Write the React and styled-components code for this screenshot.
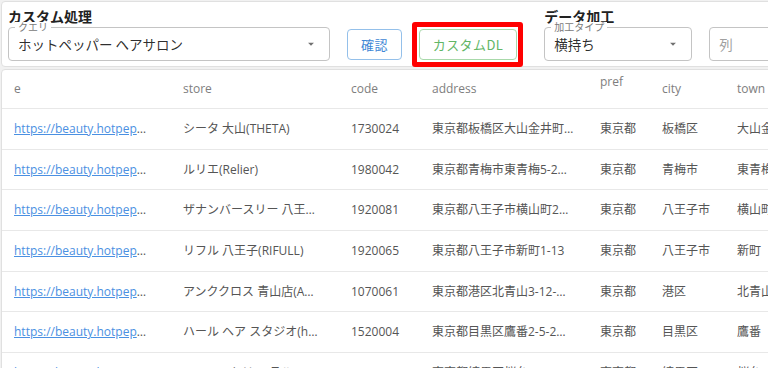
import React from 'react';
import styled, { createGlobalStyle } from 'styled-components';

const GlobalStyle = createGlobalStyle`
  html, body { margin: 0; padding: 0; background: #f1f1f1; overflow: hidden; }
  body { font-family: "Open Sans", "Noto Sans CJK JP", sans-serif; }
  #root { width: 1100px; padding: 1px 0 0 1px; }
`;

const Page = styled.div`
  display: flex;
  flex-direction: column;
  gap: 2px;
`;

const Panel = styled.div`
  display: flex;
  align-items: flex-start;
  gap: 27px;
  background: #fff;
  border: 1px solid #e0e0e0;
  border-radius: 4px;
  padding: 4px 6px 5px;
`;

const Group = styled.section`
  display: flex;
  flex-direction: column;
`;

const GroupTitle = styled.h2`
  margin: 0 0 1px;
  font-family: "Noto Sans CJK JP", sans-serif;
  font-weight: 700;
  font-size: 14px;
  line-height: 20px;
  color: #222;
`;

const Controls = styled.div`
  display: flex;
  align-items: center;
  gap: 17px;
`;

const Field = styled.div`
  position: relative;
  box-sizing: border-box;
  width: ${p => p.$width}px;
  height: 34px;
  display: flex;
  align-items: center;
  padding: 0 9px;
  border: 1px solid #c4c4c4;
  border-radius: 4px;
  background: #fff;
  font-family: "Noto Sans CJK JP", sans-serif;
  font-size: 13.5px;
`;

const FieldLabel = styled.span`
  position: absolute;
  top: -6px;
  left: 6px;
  padding: 0 3px;
  background: #fff;
  font-size: 10px;
  line-height: 10px;
  color: #7a7a7a;
`;

const FieldValue = styled.span`
  flex: 1;
  color: ${p => (p.$placeholder ? '#a0a0a0' : 'rgba(0,0,0,0.84)')};
`;

const Arrow = styled.svg`
  flex: none;
  width: 14px;
  height: 14px;
  margin-right: 2px;
  fill: #707070;
`;

const OutlineButton = styled.button`
  box-sizing: border-box;
  height: 31px;
  padding: 0 ${p => p.$px}px;
  background: #fff;
  border: 1px solid ${p => (p.$tone === 'green' ? '#a8d9aa' : '#94c0ea')};
  border-radius: 4px;
  color: ${p => (p.$tone === 'green' ? '#62b666' : '#3f87d5')};
  font-family: "Noto Sans CJK JP", sans-serif;
  font-size: 13px;
  letter-spacing: 0.4px;
  cursor: pointer;
`;

const Highlight = styled.div`
  position: relative;
  display: flex;
  &::after {
    content: "";
    position: absolute;
    left: -7px;
    right: -6px;
    top: -7px;
    bottom: -7px;
    border: 5px solid #ff0000;
    border-radius: 3px;
    pointer-events: none;
  }
`;

const TableCard = styled.div`
  background: #fff;
  border: 1px solid #e0e0e0;
  border-radius: 4px;
`;

const HeaderRow = styled.div`
  display: grid;
  grid-template-columns: ${p => p.$template};
  box-sizing: border-box;
  height: 39px;
  border-bottom: 1px solid #e8e8e8;
`;

const BodyRow = styled(HeaderRow)`
  height: 40.67px;
`;

const HeadCell = styled.div`
  padding: 0 ${p => p.$pr}px 0 12px;
  font-size: 12px;
  line-height: ${p => (p.$raised ? '23px' : '38px')};
  color: #7e7e7e;
  white-space: nowrap;
  overflow: hidden;
`;

const Cell = styled.div`
  min-width: 0;
  padding: 0 ${p => p.$pr}px 0 12px;
  font-size: 12px;
  line-height: 39.67px;
  color: #555;
  white-space: nowrap;
  overflow: hidden;
  text-overflow: ellipsis;
`;

const Link = styled.a`
  color: #4a90e2;
  text-decoration: underline;
`;

const DropIcon = () => (
  <Arrow viewBox="0 0 24 24">
    <path d="M7 10l5 5 5-5z" />
  </Arrow>
);

const columns = [
  { key: 'url', label: 'e', width: 169, pr: 21 },
  { key: 'store', label: 'store', width: 168, pr: 18 },
  { key: 'code', label: 'code', width: 81, pr: 12 },
  { key: 'address', label: 'address', width: 168, pr: 13 },
  { key: 'pref', label: 'pref', width: 62, pr: 6, raised: true },
  { key: 'city', label: 'city', width: 75, pr: 6 },
  { key: 'town', label: 'town', width: 140, pr: 6 },
];

const template = columns.map(c => `${c.width}px`).join(' ');

const rows = [
  { url: 'https://beauty.hotpepper.jp/slnH000401234/', store: 'シータ 大山(THETA)', code: '1730024', address: '東京都板橋区大山金井町1-2', pref: '東京都', city: '板橋区', town: '大山金井町' },
  { url: 'https://beauty.hotpepper.jp/slnH000352781/', store: 'ルリエ(Relier)', code: '1980042', address: '東京都青梅市東青梅5-2－1', pref: '東京都', city: '青梅市', town: '東青梅' },
  { url: 'https://beauty.hotpepper.jp/slnH000418830/', store: 'ザナンバースリー 八王子(THE NUMBER THREE)', code: '1920081', address: '東京都八王子市横山町2丁目', pref: '東京都', city: '八王子市', town: '横山町' },
  { url: 'https://beauty.hotpepper.jp/slnH000290114/', store: 'リフル 八王子(RIFULL)', code: '1920065', address: '東京都八王子市新町1-13', pref: '東京都', city: '八王子市', town: '新町' },
  { url: 'https://beauty.hotpepper.jp/slnH000377215/', store: 'アンククロス 青山店(ANKH CROSS)', code: '1070061', address: '東京都港区北青山3-12-１５', pref: '東京都', city: '港区', town: '北青山' },
  { url: 'https://beauty.hotpepper.jp/slnH000261093/', store: 'ハール ヘア スタジオ(haar hair studio)', code: '1520004', address: '東京都目黒区鷹番2-5-2鷹番ハイツ', pref: '東京都', city: '目黒区', town: '鷹番' },
  { url: 'https://beauty.hotpepper.jp/slnH000402266/', store: 'ヘアーアトリエ ラルーチェ', code: '1760002', address: '東京都練馬区桜台1-1-5', pref: '東京都', city: '練馬区', town: '桜台' },
];

export default function App() {
  return (
    <>
      <GlobalStyle />
      <Page>
        <Panel>
          <Group>
            <GroupTitle>カスタム処理</GroupTitle>
            <Controls>
              <Field $width={322}>
                <FieldLabel>クエリ</FieldLabel>
                <FieldValue>ホットペッパー ヘアサロン</FieldValue>
                <DropIcon />
              </Field>
              <OutlineButton $tone="blue" $px={13}>確認</OutlineButton>
              <Highlight>
                <OutlineButton $tone="green" $px={13}>カスタムDL</OutlineButton>
              </Highlight>
            </Controls>
          </Group>
          <Group>
            <GroupTitle>データ加工</GroupTitle>
            <Controls>
              <Field $width={148}>
                <FieldLabel>加工タイプ</FieldLabel>
                <FieldValue>横持ち</FieldValue>
                <DropIcon />
              </Field>
              <Field $width={170}>
                <FieldValue $placeholder>列</FieldValue>
              </Field>
            </Controls>
          </Group>
        </Panel>
        <TableCard>
          <HeaderRow $template={template}>
            {columns.map(c => (
              <HeadCell key={c.key} $pr={c.pr} $raised={c.raised}>{c.label}</HeadCell>
            ))}
          </HeaderRow>
          {rows.map(r => (
            <BodyRow key={r.url} $template={template}>
              {columns.map(c => (
                <Cell key={c.key} $pr={c.pr}>
                  {c.key === 'url' ? <Link href="#">{r.url}</Link> : r[c.key]}
                </Cell>
              ))}
            </BodyRow>
          ))}
        </TableCard>
      </Page>
    </>
  );
}
